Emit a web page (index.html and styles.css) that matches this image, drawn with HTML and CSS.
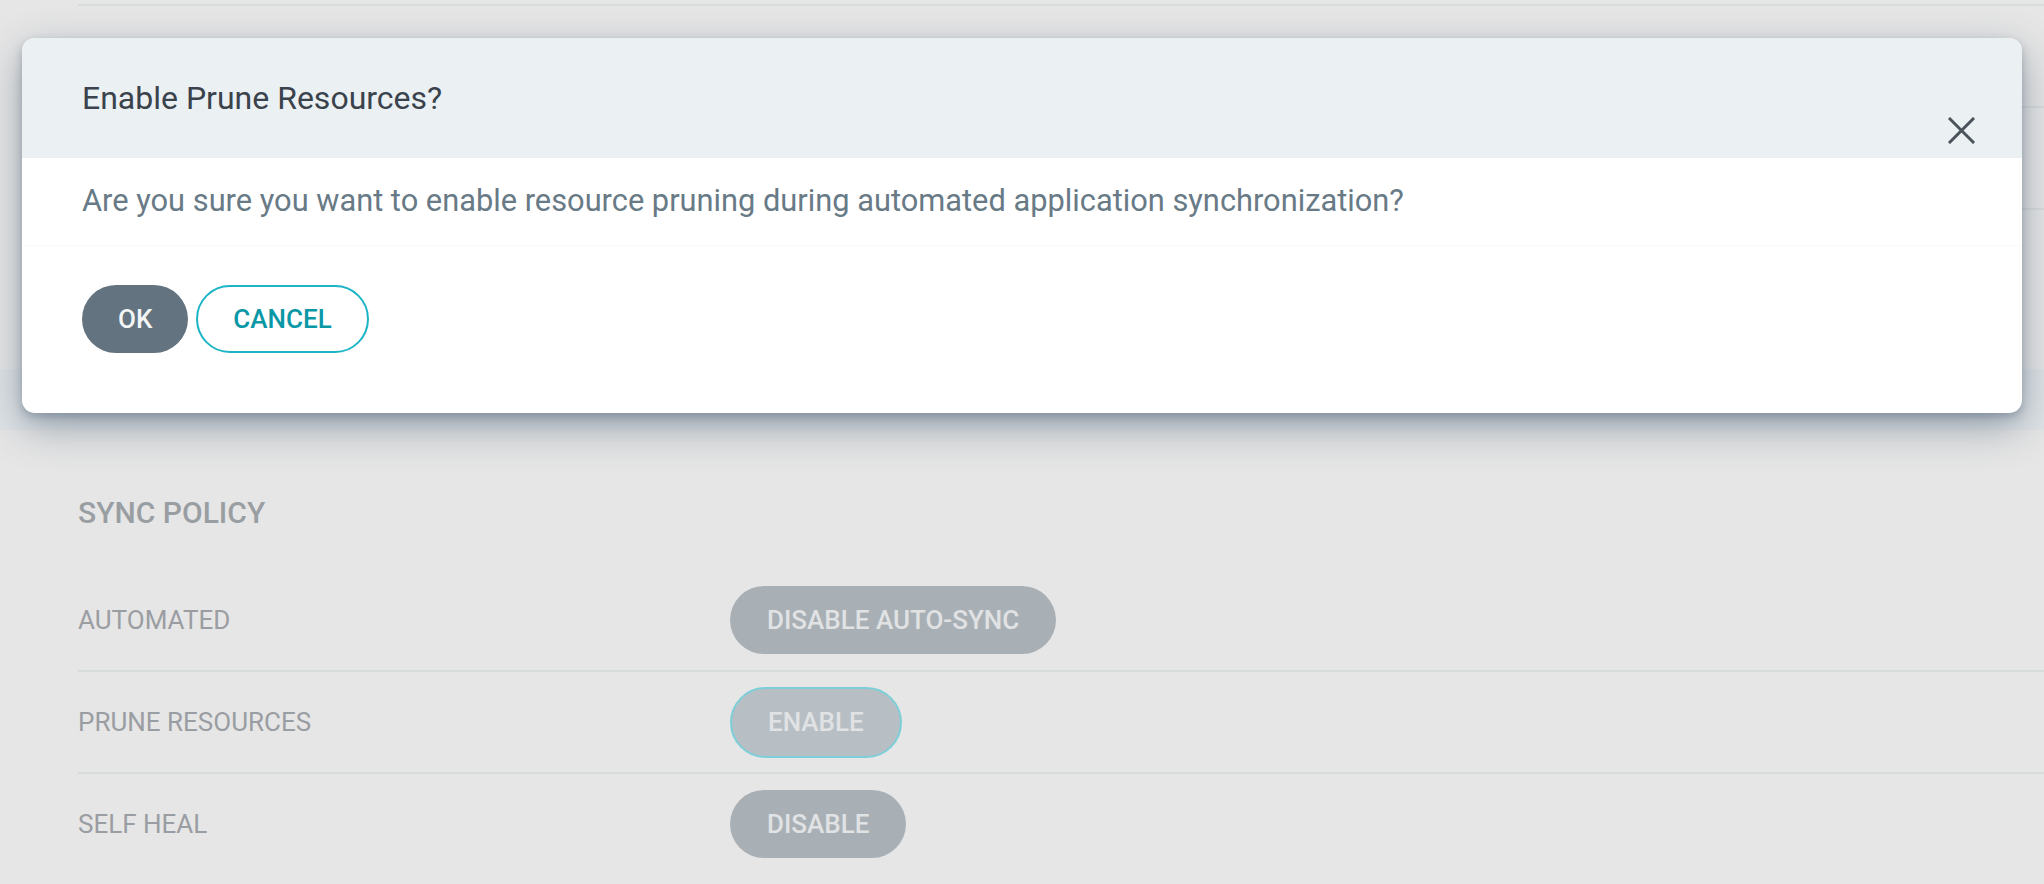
FILE: index.html
```html
<!DOCTYPE html>
<html lang="en">
<head>
<meta charset="utf-8">
<title>Enable Prune Resources?</title>
<link rel="stylesheet" href="styles.css">
</head>
<body>
<div class="page">
  <section class="panel panel-top">
    <div class="top-row top-row-first"></div>
    <div class="top-row"></div>
    <div class="top-row"></div>
  </section>
  <section class="panel panel-sync">
    <h2 class="section-title">SYNC POLICY</h2>
    <div class="policy-row">
      <div class="policy-label">AUTOMATED</div>
      <button class="btn btn-dim">DISABLE AUTO-SYNC</button>
    </div>
    <div class="policy-row">
      <div class="policy-label">PRUNE RESOURCES</div>
      <button class="btn btn-dim btn-dim-outline">ENABLE</button>
    </div>
    <div class="policy-row">
      <div class="policy-label">SELF HEAL</div>
      <button class="btn btn-dim">DISABLE</button>
    </div>
  </section>
</div>

<div class="modal">
  <div class="modal-header">
    <h1 class="modal-title">Enable Prune Resources?</h1>
  </div>
  <button class="modal-close" aria-label="Close">
    <svg width="27" height="27" viewBox="0 0 27 27"><path d="M2 2 L25 25 M25 2 L2 25" stroke="#4a525a" stroke-width="3" fill="none" stroke-linecap="square"/></svg>
  </button>
  <div class="modal-body">
    <p class="modal-text">Are you sure you want to enable resource pruning during automated application synchronization?</p>
  </div>
  <div class="modal-footer">
    <button class="btn btn-ok">OK</button>
    <button class="btn btn-cancel">CANCEL</button>
  </div>
</div>
</body>
</html>
```
FILE: styles.css
```css
html, body {
  margin: 0;
  padding: 0;
}
body {
  width: 2044px;
  height: 884px;
  overflow: hidden;
  background: #dfe3e6;
  font-family: Roboto, "Liberation Sans", Arial, sans-serif;
  position: relative;
}
.page {
  display: flex;
  flex-direction: column;
  gap: 61px;
}
.panel {
  background: #e6e6e6;
  padding-left: 78px;
}
.panel-top {
  height: 369px;
  box-sizing: border-box;
}
.top-row {
  height: 100px;
  border-bottom: 2px solid #d9dcdd;
}
.top-row-first {
  height: 4px;
}
.panel-sync {
  padding-top: 65px;
  height: 454px;
  box-sizing: border-box;
}
.section-title {
  margin: 0 0 39px 0;
  font-size: 30px;
  line-height: 36px;
  font-weight: 500;
  color: #999ea3;
}
.policy-row {
  display: flex;
  align-items: center;
  height: 100px;
  border-bottom: 2px solid #d6dbdb;
}
.policy-row:last-child {
  border-bottom: none;
}
.policy-label {
  width: 652px;
  font-size: 26px;
  color: #9a9da2;
}
.btn {
  font-family: Roboto, "Liberation Sans", Arial, sans-serif;
  font-size: 26px;
  font-weight: 500;
  height: 68px;
  padding: 0 35px;
  border-radius: 34px;
  border: 2px solid transparent;
  box-sizing: border-box;
  cursor: pointer;
  line-height: 1;
}
.btn-dim {
  background: #a9b0b5;
  color: #e0e2e4;
}
.btn-dim-outline {
  background: #b7bfc4;
  border-color: #7ccfd8;
  height: 71px;
  border-radius: 36px;
  padding: 0 36px;
}

/* modal */
.modal {
  position: absolute;
  left: 22px;
  top: 38px;
  width: 2000px;
  height: 375px;
  background: #fff;
  border-radius: 13px;
  overflow: hidden;
  box-shadow: 0 4px 8px rgba(60, 80, 100, 0.3), 0 14px 40px rgba(60, 80, 100, 0.45);
  display: flex;
  flex-direction: column;
}
.modal-header {
  height: 120px;
  background: #ebf0f3;
  display: flex;
  align-items: center;
  padding-left: 60px;
  flex-shrink: 0;
}
.modal-title {
  margin: 0;
  font-size: 32px;
  line-height: 38px;
  font-weight: 400;
  color: #3a424c;
}
.modal-close {
  position: absolute;
  left: 1926px;
  top: 79px;
  width: 27px;
  height: 27px;
  padding: 0;
  border: none;
  background: none;
  display: flex;
}
.modal-body {
  padding: 25px 60px 26px;
}
.modal-text {
  margin: 0;
  font-size: 30.8px;
  line-height: 36px;
  color: #687a86;
}
.modal-footer {
  border-top: 1px solid #fafafa;
  padding: 39px 60px 0;
  display: flex;
  gap: 8px;
}
.btn-ok {
  background: #63737f;
  color: #f3f5f6;
  padding: 0 34px;
}
.btn-cancel {
  background: #fff;
  color: #0a97a6;
  border-color: #1db5c6;
}
```
